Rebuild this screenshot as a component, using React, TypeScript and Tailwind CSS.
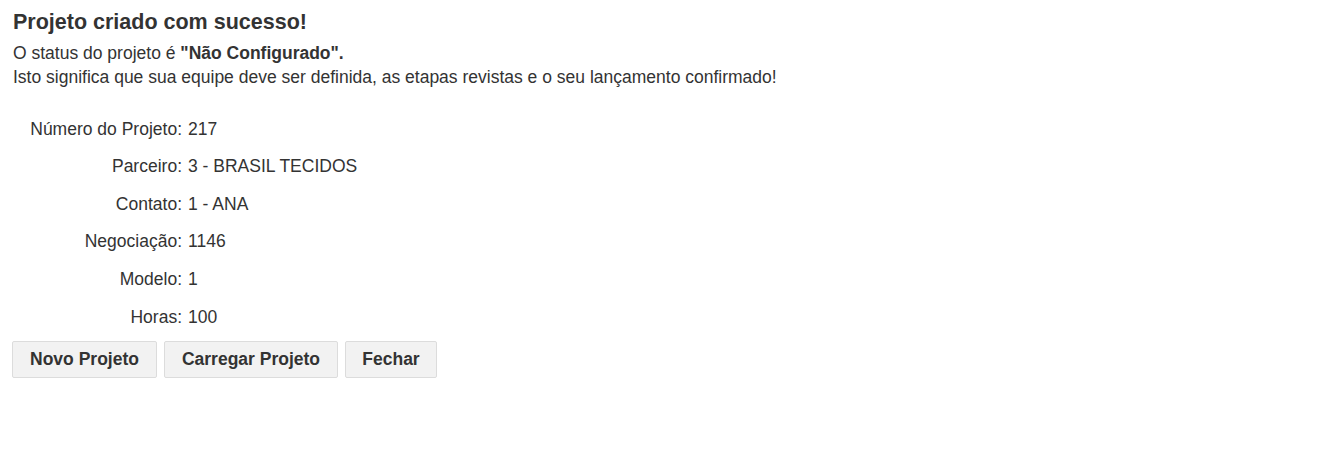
// Tela de confirmação após criar projeto

const detalhes: { label: string; valor: string }[] = [
  { label: 'Número do Projeto:', valor: '217' },
  { label: 'Parceiro:', valor: '3 - BRASIL TECIDOS' },
  { label: 'Contato:', valor: '1 - ANA' },
  { label: 'Negociação:', valor: '1146' },
  { label: 'Modelo:', valor: '1' },
  { label: 'Horas:', valor: '100' },
]

export default function App() {
  return (
    <div className="min-h-screen bg-white px-[13px] pt-[8px] font-['Liberation_Sans',Arial,sans-serif] text-[#333]">
      <h3 className="text-[21.5px] font-bold leading-[28px]">Projeto criado com sucesso!</h3>
      <div className="mt-[5px] text-[17.5px] leading-[24px]">
        <p>
          O status do projeto é <b>"Não Configurado".</b>
        </p>
        <p>Isto significa que sua equipe deve ser definida, as etapas revistas e o seu lançamento confirmado!</p>
      </div>

      <div className="mt-[21px] flex flex-col text-[17.5px]">
        {detalhes.map((d) => (
          <div key={d.label} className="flex h-[37.6px] items-center">
            <span className="w-[169px] text-right">{d.label}</span>
            <span className="ml-[6px]">{d.valor}</span>
          </div>
        ))}
      </div>

      <div className="mt-[5px] -ml-px flex gap-[7px]">
        <button className="h-[37px] w-[145px] rounded-[2px] border border-[#dcdcdc] bg-[#f2f2f2] text-[17.5px] font-bold text-[#333]">
          Novo Projeto
        </button>
        <button className="h-[37px] w-[174px] rounded-[2px] border border-[#dcdcdc] bg-[#f2f2f2] text-[17.5px] font-bold text-[#333]">
          Carregar Projeto
        </button>
        <button className="h-[37px] w-[92px] rounded-[2px] border border-[#dcdcdc] bg-[#f2f2f2] text-[17.5px] font-bold text-[#333]">
          Fechar
        </button>
      </div>
    </div>
  )
}
